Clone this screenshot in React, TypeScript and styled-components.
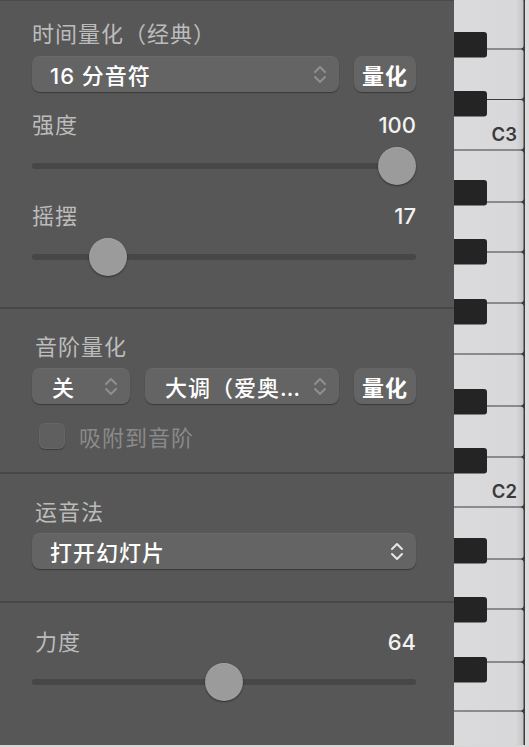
import styled, { createGlobalStyle } from "styled-components";

const GlobalStyle = createGlobalStyle`
  html, body {
    margin: 0;
    padding: 0;
    background: #d8d8d8;
  }
  body {
    font-family: "Inter", "Noto Sans CJK SC", sans-serif;
    -webkit-font-smoothing: antialiased;
  }
`;

const Layout = styled.div`
  display: flex;
  width: 529px;
  height: 745px;
  overflow: hidden;
`;

const Panel = styled.div`
  width: 454px;
  flex: none;
  display: flex;
  flex-direction: column;
  background: #575757;
  border-top: 1px solid #4b4b4b;
  box-sizing: border-box;
`;

const Section = styled.section<{ $top: number; $left: number; $height?: number }>`
  box-sizing: border-box;
  display: flex;
  flex-direction: column;
  padding: ${(p) => p.$top}px 38px 0 ${(p) => p.$left}px;
  height: ${(p) => (p.$height ? `${p.$height}px` : "auto")};
  flex: ${(p) => (p.$height ? "none" : "1")};

  & + & {
    border-top: 2px solid #474747;
  }
`;

const Title = styled.div<{ $indent?: number }>`
  height: 28px;
  line-height: 28px;
  padding-left: ${(p) => p.$indent ?? 0}px;
  font-size: 22px;
  color: #bcbcbc;
  letter-spacing: 1px;
`;

const LabelRow = styled.div<{ $mt?: number }>`
  display: flex;
  align-items: center;
  justify-content: space-between;
  height: 28px;
  margin-top: ${(p) => p.$mt ?? 0}px;
`;

const Value = styled.span`
  font-size: 22px;
  font-weight: 500;
  color: #f2f2f2;
`;

const ControlRow = styled.div<{ $mt: number }>`
  display: flex;
  gap: 15px;
  margin-top: ${(p) => p.$mt}px;
`;

const Select = styled.div<{ $width?: number; $pad?: number; $bright?: boolean }>`
  box-sizing: border-box;
  display: flex;
  align-items: center;
  justify-content: space-between;
  height: 36px;
  width: ${(p) => (p.$width ? `${p.$width}px` : "auto")};
  flex: ${(p) => (p.$width ? "none" : "1")};
  padding: 0 12px 0 ${(p) => p.$pad ?? 18}px;
  border-radius: 8px;
  background: #646464;
  box-shadow: 0 1px 1px rgba(0, 0, 0, 0.35), inset 0 1px 0 rgba(255, 255, 255, 0.04);
  color: #ffffff;
  font-size: 22px;
  font-weight: 500;
  letter-spacing: 1px;
  white-space: nowrap;

  svg {
    flex: none;
    color: ${(p) => (p.$bright ? "#e6e6e6" : "#8f8f8f")};
  }
`;

const QuantizeButton = styled.button`
  box-sizing: border-box;
  width: 62px;
  height: 36px;
  flex: none;
  padding: 0;
  border: none;
  border-radius: 8px;
  background: #646464;
  box-shadow: 0 1px 1px rgba(0, 0, 0, 0.35);
  color: #ffffff;
  font-family: inherit;
  font-size: 22px;
  font-weight: 600;
  letter-spacing: 1px;
`;

const Track = styled.div<{ $mt: number }>`
  position: relative;
  height: 38px;
  margin-top: ${(p) => p.$mt}px;

  &::before {
    content: "";
    position: absolute;
    left: 0;
    right: 0;
    top: 16px;
    height: 6px;
    border-radius: 3px;
    background: #474747;
  }
`;

const Thumb = styled.div`
  position: absolute;
  top: 0;
  width: 38px;
  height: 38px;
  border-radius: 50%;
  background: #9b9b9b;
  box-shadow: 0 1px 2px rgba(0, 0, 0, 0.45), inset 0 1px 0 rgba(255, 255, 255, 0.12);
`;

const CheckRow = styled.label<{ $mt: number }>`
  display: flex;
  align-items: center;
  gap: 14px;
  height: 26px;
  margin-top: ${(p) => p.$mt}px;
  padding-left: 7px;
  font-size: 22px;
  color: #8a8a8a;
  letter-spacing: 1px;
`;

const CheckBox = styled.span`
  box-sizing: border-box;
  width: 26px;
  height: 26px;
  border-radius: 6px;
  background: #5f5f5f;
  box-shadow: 0 1px 1px rgba(0, 0, 0, 0.3), inset 0 0 0 1px rgba(255, 255, 255, 0.04);
`;

const ArticulationSelect = styled(Select)`
  flex: none;
  margin-top: 7px;
`;

const Keyboard = styled.svg`
  display: block;
  flex: none;
`;

const Chevrons = () => (
  <svg width="14" height="19" viewBox="0 0 14 19" fill="none">
    <path d="M2 7 L7 2 L12 7" stroke="currentColor" strokeWidth="2" strokeLinecap="round" strokeLinejoin="round" />
    <path d="M2 12 L7 17 L12 12" stroke="currentColor" strokeWidth="2" strokeLinecap="round" strokeLinejoin="round" />
  </svg>
);

const Slider = ({ value, min, max, mt }: { value: number; min: number; max: number; mt: number }) => {
  const frac = (value - min) / (max - min);
  return (
    <Track $mt={mt}>
      <Thumb style={{ left: `calc(${frac} * (100% - 38px))` }} />
    </Track>
  );
};

const whiteEdges = [-2, 49, 99.5, 150, 202, 252, 303, 354, 406, 457, 507, 559, 609, 662, 711, 762];
const blackTops = [32, 91, 180, 239, 299, 389, 448, 538, 597, 657];
const labels = [
  { name: "C3", y: 141 },
  { name: "C2", y: 498 },
];

const Piano = () => (
  <Keyboard width="75" height="745" viewBox="0 0 75 745">
    <defs>
      <linearGradient id="white" x1="0" x2="1" y1="0" y2="0">
        <stop offset="0" stopColor="#dbdbdd" />
        <stop offset="0.9" stopColor="#d8d8da" />
        <stop offset="1" stopColor="#c4c4c6" />
      </linearGradient>
    </defs>
    <rect x="0" y="0" width="75" height="745" fill="#dcdcdc" />
    <rect x="0" y="0" width="71" height="745" fill="#3c3c3c" />
    {whiteEdges.slice(0, -1).map((top, i) => (
      <rect
        key={top}
        x={-6}
        y={top + 0.6}
        width={75.5}
        height={whiteEdges[i + 1] - top - 1.2}
        rx={3}
        fill="url(#white)"
      />
    ))}
    {blackTops.map((top) => (
      <rect key={top} x={-5} y={top} width={38} height={25.5} rx={3} fill="#242424" />
    ))}
    {labels.map((l) => (
      <text
        key={l.name}
        x={63}
        y={l.y}
        textAnchor="end"
        fontFamily="Inter, 'Liberation Sans', sans-serif"
        fontSize="18.5"
        fontWeight="600"
        fill="#3a3a3a"
      >
        {l.name}
      </text>
    ))}
  </Keyboard>
);

export default function App() {
  return (
    <>
      <GlobalStyle />
      <Layout>
        <Panel>
          <Section $top={19} $left={32} $height={306}>
            <Title>时间量化（经典）</Title>
            <ControlRow $mt={8}>
              <Select>
                <span>16 分音符</span>
                <Chevrons />
              </Select>
              <QuantizeButton>量化</QuantizeButton>
            </ControlRow>
            <LabelRow $mt={19}>
              <Title>强度</Title>
              <Value>100</Value>
            </LabelRow>
            <Slider value={100} min={0} max={100} mt={8} />
            <LabelRow $mt={17}>
              <Title>摇摆</Title>
              <Value>17</Value>
            </LabelRow>
            <Slider value={16.5} min={0} max={100} mt={8} />
          </Section>

          <Section $top={24} $left={32} $height={165}>
            <Title $indent={3}>音阶量化</Title>
            <ControlRow $mt={7}>
              <Select $width={98} $pad={20}>
                <span>关</span>
                <Chevrons />
              </Select>
              <Select $pad={20}>
                <span>大调（爱奥…</span>
                <Chevrons />
              </Select>
              <QuantizeButton>量化</QuantizeButton>
            </ControlRow>
            <CheckRow $mt={19}>
              <CheckBox />
              吸附到音阶
            </CheckRow>
          </Section>

          <Section $top={24} $left={32} $height={129}>
            <Title $indent={3}>运音法</Title>
            <ArticulationSelect $bright>
              <span>打开幻灯片</span>
              <Chevrons />
            </ArticulationSelect>
          </Section>

          <Section $top={25} $left={32}>
            <LabelRow>
              <Title $indent={3}>力度</Title>
              <Value>64</Value>
            </LabelRow>
            <Slider value={64} min={1} max={127} mt={7} />
          </Section>
        </Panel>
        <Piano />
      </Layout>
    </>
  );
}
